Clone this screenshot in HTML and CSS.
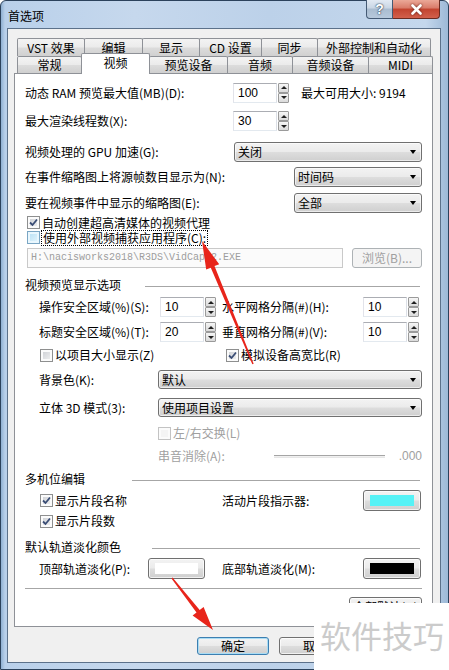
FILE: index.html
```html
<!DOCTYPE html>
<html lang="zh-CN">
<head>
<meta charset="utf-8">
<title>首选项</title>
<link rel="stylesheet" href="styles.css">
</head>
<body>
<div class="window">
  <div class="titlebar">
    <span class="title">首选项</span>
    <div class="caption">
      <div class="cap help">?</div>
      <div class="cap close"><svg width="13" height="11" viewBox="0 0 13 11"><path d="M2.5 1.5 L10.5 9.5 M10.5 1.5 L2.5 9.5" stroke="#fff" stroke-width="2.6" stroke-linecap="round"/></svg></div>
    </div>
  </div>
  <div class="client">
    <div class="tabs">
      <div class="tabrow back">
        <div class="tab w68">VST 效果</div>
        <div class="tab w59">编辑</div>
        <div class="tab w58">显示</div>
        <div class="tab w63">CD 设置</div>
        <div class="tab w57">同步</div>
        <div class="tab w114">外部控制和自动化</div>
      </div>
      <div class="tabrow front">
        <div class="tab w65">常规</div>
        <div class="tab w69 selected">视频</div>
        <div class="tab w79">预览设备</div>
        <div class="tab w66">音频</div>
        <div class="tab w77">音频设备</div>
        <div class="tab w65">MIDI</div>
      </div>
    </div>
    <div class="panel">
      <div class="row r-ram">
        <span class="lbl w208">动态 RAM 预览最大值(MB)(D):</span>
        <div class="spin"><div class="field">100</div><div class="updown"><span class="up"><i></i></span><span class="dn"><i></i></span></div></div>
        <span class="avail">最大可用大小: 9194</span>
      </div>
      <div class="row r-threads">
        <span class="lbl w208">最大渲染线程数(X):</span>
        <div class="spin"><div class="field">30</div><div class="updown"><span class="up"><i></i></span><span class="dn"><i></i></span></div></div>
      </div>
      <div class="row r-gpu">
        <span class="lbl w209">视频处理的 GPU 加速(G):</span>
        <div class="select"><span>关闭</span><i class="caret"></i></div>
      </div>
      <div class="row r-frames">
        <span class="lbl w269">在事件缩略图上将源帧数目显示为(N):</span>
        <div class="select"><span>时间码</span><i class="caret"></i></div>
      </div>
      <div class="row r-thumbs">
        <span class="lbl w269">要在视频事件中显示的缩略图(E):</span>
        <div class="select"><span>全部</span><i class="caret"></i></div>
      </div>
      <div class="row r-proxy cbrow">
        <span class="cb checked"><svg width="9" height="9" viewBox="0 0 9 9"><path d="M1 4.5 L3.5 7 L8 1.5" stroke="#3a4d75" stroke-width="1.8" fill="none"/></svg></span>
        <span class="cbl">自动创建超高清媒体的视频代理</span>
      </div>
      <div class="row r-capture cbrow">
        <span class="cb hover"></span>
        <span class="cbl focus">使用外部视频捕获应用程序(C):</span>
      </div>
      <div class="row r-path">
        <div class="pathfield">H:\nacisworks2018\R3DS\VidCap32.EXE</div>
        <div class="btn disabled browse">浏览(B)...</div>
      </div>
      <div class="row r-group">
        <span class="gl g1">视频预览显示选项</span><span class="gline"></span>
      </div>
      <div class="row r-safe1 ind">
        <span class="lbl w121">操作安全区域(%)(S):</span>
        <div class="spin"><div class="field">10</div><div class="updown"><span class="up"><i></i></span><span class="dn"><i></i></span></div></div>
        <span class="lbl w141 col2">水平网格分隔(#)(H):</span>
        <div class="spin"><div class="field">10</div><div class="updown"><span class="up"><i></i></span><span class="dn"><i></i></span></div></div>
      </div>
      <div class="row r-safe2 ind">
        <span class="lbl w121">标题安全区域(%)(T):</span>
        <div class="spin"><div class="field">20</div><div class="updown"><span class="up"><i></i></span><span class="dn"><i></i></span></div></div>
        <span class="lbl w141 col2">垂直网格分隔(#)(V):</span>
        <div class="spin"><div class="field">10</div><div class="updown"><span class="up"><i></i></span><span class="dn"><i></i></span></div></div>
      </div>
      <div class="row r-cbs cbind">
        <div class="cbcell w186"><span class="cb"></span><span class="cbl">以项目大小显示(Z)</span></div>
        <div class="cbcell"><span class="cb checked"><svg width="9" height="9" viewBox="0 0 9 9"><path d="M1 4.5 L3.5 7 L8 1.5" stroke="#3a4d75" stroke-width="1.8" fill="none"/></svg></span><span class="cbl">模拟设备高宽比(R)</span></div>
      </div>
      <div class="row r-bg ind">
        <span class="lbl w119">背景色(K):</span>
        <div class="select"><span>默认</span><i class="caret"></i></div>
      </div>
      <div class="row r-3d ind">
        <span class="lbl w119">立体 3D 模式(3):</span>
        <div class="select"><span>使用项目设置</span><i class="caret"></i></div>
      </div>
      <div class="row r-swap deep">
        <span class="cb disabled"></span><span class="cbl dis">左/右交换(L)</span>
      </div>
      <div class="row r-cross deep">
        <span class="lbl w116 dis">串音消除(A):</span>
        <span class="slider"></span>
        <span class="sval dis">.000</span>
      </div>
      <div class="row r-group2">
        <span class="gl g2">多机位编辑</span><span class="gline"></span>
      </div>
      <div class="row r-clipname cbind">
        <div class="cbcell w182"><span class="cb checked"><svg width="9" height="9" viewBox="0 0 9 9"><path d="M1 4.5 L3.5 7 L8 1.5" stroke="#3a4d75" stroke-width="1.8" fill="none"/></svg></span><span class="cbl">显示片段名称</span></div>
        <span class="lbl w141">活动片段指示器:</span>
        <div class="btn swatchbtn w58"><span class="swatch cyan"></span></div>
      </div>
      <div class="row r-clipnum cbind">
        <span class="cb checked"><svg width="9" height="9" viewBox="0 0 9 9"><path d="M1 4.5 L3.5 7 L8 1.5" stroke="#3a4d75" stroke-width="1.8" fill="none"/></svg></span><span class="cbl">显示片段数</span>
      </div>
      <div class="row r-group3">
        <span class="gl g3">默认轨道淡化颜色</span><span class="gline"></span>
      </div>
      <div class="row r-fade ind">
        <span class="lbl w109">顶部轨道淡化(P):</span>
        <div class="btn swatchbtn w57"><span class="swatch white"></span></div>
        <span class="lbl w141 col2b">底部轨道淡化(M):</span>
        <div class="btn swatchbtn w58"><span class="swatch black"></span></div>
      </div>
      <div class="sep"></div>
      <div class="row r-defaults">
        <div class="btn defaults">全部默认(U)</div>
      </div>
    </div>
    <div class="dlgbtns">
      <div class="btn default">确定</div>
      <div class="btn">取消</div>
      <div class="btn">应用(A)</div>
    </div>
  </div>
  <div class="watermark">软件技巧</div>
  <svg class="arrows" width="449" height="670" viewBox="0 0 449 670">
    <polygon fill="#e8251b" points="202,241 219.2,264.2 214.5,266.1 253.7,363.7 252.3,364.3 210.8,267.7 206.2,269.6"/>
    <polygon fill="#e8251b" points="213,630 203.6,606.9 199.7,610 172.55,577.57 171.45,578.43 196.5,612.4 192.6,615.5"/>
  </svg>
</div>
</body>
</html>
```

FILE: styles.css
```css
* { box-sizing: border-box; }
html, body { margin: 0; padding: 0; }
body {
  width: 449px;
  height: 670px;
  overflow: hidden;
  font-family: "Noto Sans CJK SC", "Liberation Sans", sans-serif;
  font-size: 12px;
  line-height: 14px;
  color: #000;
  background: #fff;
}

.window {
  position: relative;
  width: 449px;
  height: 670px;
  display: flex;
  flex-direction: column;
  padding: 0 7px 6px 6px;
  border: 1px solid #2c425c;
  border-radius: 6px 6px 0 0;
  background: linear-gradient(to right, #8fb0d2 0px, #b9d0ea 4px, #c6d8ed 30%, #bcd1e9 60%, #c4d7ec 95%, #9db9d7 100%);
}

/* title bar */
.titlebar {
  height: 27px;
  display: flex;
  align-items: flex-start;
  flex: none;
}
.title {
  margin: 7px 0 0 1px;
  font-size: 12px;
  line-height: 16px;
}
.caption {
  margin-left: auto;
  margin-top: -1px;
  margin-right: 1px;
  display: flex;
}
.cap {
  height: 19px;
  display: flex;
  align-items: center;
  justify-content: center;
  border: 1px solid #445a74;
  border-top: none;
}
.help {
  width: 27px;
  border-radius: 0 0 0 4px;
  background: linear-gradient(#e2eaf3 0%, #c9d6e4 45%, #a9bcd0 50%, #b7c9dc 100%);
  color: #fff;
  font-family: "Liberation Sans", sans-serif;
  font-weight: bold;
  font-size: 14px;
  text-shadow: 0 0 2px #24384f, 0 0 1px #24384f;
}
.close {
  width: 47px;
  border-left: none;
  border-color: #6a2b22;
  border-radius: 0 0 4px 0;
  background: linear-gradient(#eba898 0%, #d97b69 45%, #c2432f 50%, #d2604c 100%);
}
.close svg { filter: drop-shadow(0 0 1px #5a1a12); }

/* client */
.client {
  flex: 1;
  display: flex;
  flex-direction: column;
  background: #f0f0f0;
  border: 1px solid #5c718a;
  padding: 9px 7px 0 6px;
}

.tabs {
  position: relative;
  z-index: 2;
  margin-left: 3px;
  height: 35px;
  flex: none;
}
.tabrow { display: flex; }
.tabrow.back { height: 18px; }
.tabrow.front { height: 17px; }
.tab {
  flex: none;
  margin-right: -1px;
  height: 18px;
  border: 1px solid #8e9197;
  border-bottom: none;
  border-radius: 2px 2px 0 0;
  background: linear-gradient(#f3f3f3 0%, #ebebeb 48%, #dcdcdc 52%, #d0d0d0 100%);
  display: flex;
  align-items: center;
  justify-content: center;
  font-size: 12px;
  white-space: nowrap;
}
.tabrow.front .tab { height: 17px; }
.tabrow.front .tab.selected {
  position: relative;
  top: -3px;
  height: 21px;
  background: #fff;
  z-index: 3;
  padding-bottom: 2px;
}
.w68 { width: 68px; }
.w59 { width: 59px; }
.w58 { width: 58px; }
.w63 { width: 63px; }
.w57 { width: 57px; }
.w114 { width: 114px; }
.w65 { width: 65px; }
.w69 { width: 69px; }
.w79 { width: 79px; }
.w66 { width: 66px; }
.w77 { width: 77px; }

/* panel */
.panel {
  position: relative;
  z-index: 1;
  flex: none;
  width: 419px;
  height: 554px;
  background: #fff;
  border: 1px solid #8e9197;
  padding: 0 10px;
  display: flex;
  flex-direction: column;
}
.row {
  display: flex;
  align-items: center;
  flex: none;
  white-space: nowrap;
}
.lbl { flex: none; }
.w208 { width: 208px; }
.w209 { width: 209px; }
.w269 { width: 269px; }
.w121 { width: 121px; }
.w141 { width: 141px; }
.w119 { width: 119px; }
.w116 { width: 116px; }
.w109 { width: 109px; }
.w186 { width: 186px; }
.w182 { width: 182px; }
.col2 { margin-left: 6px; }
.col2b { margin-left: 17px; }

.r-ram { margin-top: 8px; height: 21px; }
.r-threads { margin-top: 8px; height: 20px; }
.r-gpu { margin-top: 11px; height: 20px; }
.r-frames { margin-top: 5px; height: 20px; }
.r-thumbs { margin-top: 6px; height: 20px; }
.r-proxy { margin-top: 3px; height: 13px; }
.r-capture { margin-top: 2px; height: 13px; }
.r-path { margin-top: 4px; height: 20px; padding-left: 2px; }
.r-group { margin-top: 10px; height: 14px; }
.r-safe1 { margin-top: 5px; height: 20px; }
.r-safe2 { margin-top: 5px; height: 20px; }
.r-cbs { margin-top: 6px; height: 14px; }
.r-bg { margin-top: 8px; height: 19px; }
.r-3d { margin-top: 9px; height: 19px; }
.r-swap { margin-top: 9px; height: 14px; }
.r-cross { margin-top: 9px; height: 14px; }
.r-group2 { margin-top: 9px; height: 14px; }
.r-clipname { margin-top: 4px; height: 21px; }
.r-clipnum { margin-top: 3px; height: 14px; }
.r-group3 { margin-top: 12px; height: 14px; }
.r-fade { margin-top: 4px; height: 21px; }
.r-defaults { margin-top: 8px; height: 20px; justify-content: flex-end; }

.ind { padding-left: 14px; }
.cbrow { padding-left: 2px; }
.cbind { padding-left: 15px; }
.deep { padding-left: 133px; }
.cbcell { display: flex; align-items: center; flex: none; }

/* spin box */
.spin { display: flex; flex: none; height: 20px; }
.field {
  width: 44px;
  height: 20px;
  border: 1px solid #abadb3;
  border-color: #abadb3 #dbdfe6 #e3e9ef #e2e3ea;
  background: #fff;
  padding-left: 4px;
  display: flex;
  align-items: center;
  font-family: "Liberation Sans", sans-serif;
  font-size: 12px;
}
.updown {
  width: 11px;
  height: 20px;
  margin-left: 1px;
  display: flex;
  flex-direction: column;
}
.updown span {
  flex: 1;
  border: 1px solid #9a9a9a;
  border-radius: 1px;
  background: linear-gradient(#f6f6f6, #dadada);
  display: flex;
  align-items: center;
  justify-content: center;
}
.updown .up i {
  width: 0; height: 0;
  border-left: 3px solid transparent;
  border-right: 3px solid transparent;
  border-bottom: 3px solid #1e1e1e;
}
.updown .dn i {
  width: 0; height: 0;
  border-left: 3px solid transparent;
  border-right: 3px solid transparent;
  border-top: 3px solid #1e1e1e;
}
.avail { margin-left: 12px; }

/* select */
.select {
  flex: 1;
  height: 100%;
  border: 1px solid #707070;
  border-radius: 3px;
  background: linear-gradient(#f3f3f3 0%, #ebebeb 48%, #dddddd 52%, #cfcfcf 100%);
  box-shadow: inset 0 0 0 1px rgba(255,255,255,0.6);
  display: flex;
  align-items: center;
  padding-left: 3px;
}
.caret {
  margin-left: auto;
  margin-right: 5px;
  width: 0; height: 0;
  border-left: 3.5px solid transparent;
  border-right: 3.5px solid transparent;
  border-top: 4px solid #000;
}

/* checkbox */
.cb {
  flex: none;
  width: 13px;
  height: 13px;
  border: 1px solid #8e8f8f;
  background: linear-gradient(135deg, #c9ccd1 0%, #f4f4f4 100%);
  box-shadow: inset 0 0 0 2px #fbfbfb;
  display: flex;
  align-items: center;
  justify-content: center;
}
.cb.hover {
  border-color: #7aa6c4;
  background: linear-gradient(135deg, #b6dff4 0%, #e6f6fd 100%);
  box-shadow: inset 0 0 0 2px #e9f7fe;
}
.cb.disabled {
  border-color: #c3c3c3;
  background: #f4f4f4;
  box-shadow: inset 0 0 0 2px #fbfbfb;
}
.cbl { margin-left: 2px; }
.cbl.focus { outline: 1px dotted #000; outline-offset: 0; padding: 0 1px; }
.dis { color: #a0a0a0; }

/* path field */
.pathfield {
  width: 316px;
  height: 20px;
  border: 1px solid #c9c9c9;
  background: #fbfbfb;
  color: #9d9d9d;
  font-family: "Liberation Mono", monospace;
  font-size: 10px;
  padding-left: 3px;
  display: flex;
  align-items: center;
  flex: none;
}

/* buttons */
.btn {
  height: 18px;
  border: 1px solid #707070;
  border-radius: 3px;
  background: linear-gradient(#f3f3f3 0%, #ebebeb 48%, #dddddd 52%, #cfcfcf 100%);
  box-shadow: inset 0 0 0 1px rgba(255,255,255,0.7);
  display: flex;
  align-items: center;
  justify-content: center;
  flex: none;
}
.btn.disabled {
  border-color: #adb2b5;
  background: #f4f4f4;
  color: #a0a0a0;
  box-shadow: none;
}
.browse { width: 70px; height: 20px; margin-left: 9px; }
.swatchbtn { height: 21px; padding: 4px 6px; }
.w57 { width: 57px; }
.w58 { width: 58px; }
.swatch { display: block; width: 100%; height: 100%; }
.swatch.cyan { background: #55f2f6; }
.swatch.white { background: #fff; }
.swatch.black { background: #000; }
.defaults { width: 73px; height: 20px; }

/* groups */
.gl { flex: none; }
.g1 { width: 120px; }
.g2 { width: 107px; }
.g3 { width: 127px; }
.gline {
  flex: 1;
  height: 1px;
  margin-right: 2px;
  margin-top: 2px;
  background: #a6a6a6;
}

/* slider */
.slider {
  flex: none;
  width: 111px;
  height: 3px;
  border-top: 1px solid #a5a5a5;
  border-bottom: 1px solid #e6e6e6;
  background: #f0f0f0;
}
.sval { margin-left: auto; font-family: "Liberation Sans", sans-serif; }

.sep {
  flex: none;
  margin-top: 9px;
  height: 1px;
  background: #a6a6a6;
}

/* dialog buttons */
.dlgbtns {
  margin-top: 10px;
  display: flex;
  justify-content: flex-end;
  gap: 10px;
}
.dlgbtns .btn { width: 72px; }
.btn.default {
  border-color: #3c7fb1;
  box-shadow: inset 0 0 0 1px #a9dcf4;
}

/* overlays */
.watermark {
  position: absolute;
  left: 313px;
  top: 602px;
  right: -1px;
  bottom: -1px;
  background: #fff;
  color: #cbcbcb;
  font-size: 31px;
  line-height: 31px;
  padding: 16px 0 0 6px;
  z-index: 10;
  white-space: nowrap;
}
.arrows {
  position: absolute;
  left: -1px;
  top: -1px;
  z-index: 9;
  pointer-events: none;
}
```
